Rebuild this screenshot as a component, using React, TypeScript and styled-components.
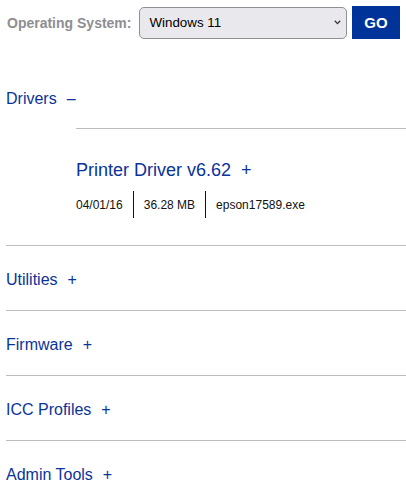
import React from 'react';
import styled, { createGlobalStyle } from 'styled-components';

const GlobalStyle = createGlobalStyle`
  body {
    margin: 0;
    background: #fff;
    font-family: 'Liberation Sans', Arial, Helvetica, sans-serif;
  }
`;

type Download = {
  title: string;
  date: string;
  size: string;
  file: string;
};

type Category = {
  name: string;
  // Open categories list their downloads underneath
  open?: boolean;
  downloads?: Download[];
};

const categories: Category[] = [
  {
    name: 'Drivers',
    open: true,
    downloads: [{ title: 'Printer Driver v6.62', date: '04/01/16', size: '36.28 MB', file: 'epson17589.exe' }],
  },
  { name: 'Utilities' },
  { name: 'Firmware' },
  { name: 'ICC Profiles' },
  { name: 'Admin Tools' },
];

const Page = styled.div`
  width: 406px;
  color: #111;
`;

const OsBar = styled.form`
  display: flex;
  align-items: center;
  padding: 6px 6px 0 7px;
  margin-bottom: 26px;
`;

const OsLabel = styled.label`
  font-size: 14px;
  font-weight: bold;
  color: #8e8e92;
  margin-right: 8px;
  white-space: nowrap;
`;

const SelectWrap = styled.div`
  position: relative;
  width: 208px;
  height: 32px;
`;

const OsSelect = styled.select`
  appearance: none;
  width: 100%;
  height: 100%;
  box-sizing: border-box;
  padding: 0 24px 0 9px;
  font-family: 'Liberation Sans', Arial, sans-serif;
  font-size: 13.33px;
  color: #000;
  background: #e9e9ed;
  border: 1px solid #8f8f95;
  border-radius: 5px;
  outline: none;
`;

const Chevron = styled.svg`
  position: absolute;
  right: 6px;
  top: 13px;
  pointer-events: none;
`;

const GoButton = styled.button`
  margin-left: 5px;
  width: 48px;
  height: 33px;
  border: none;
  background: #003399;
  color: #fff;
  font-family: 'Liberation Sans', Arial, sans-serif;
  font-size: 15px;
  font-weight: bold;
  cursor: pointer;
`;

const Sections = styled.div`
  margin-left: 6px;
`;

const Section = styled.section<{ first?: boolean }>`
  border-top: ${({ first }) => (first ? 'none' : '1px solid #bcbcbc')};
  padding: 25px 0 21px;
`;

const SectionTitle = styled.div`
  font-size: 16px;
  line-height: 18px;
  color: #0b3399;
  cursor: pointer;
`;

const Toggle = styled.span`
  margin-left: 10px;
`;

const SectionBody = styled.div`
  margin: 20px 0 6px 70px;
  border-top: 1px solid #bcbcbc;
  padding-top: 31px;
`;

const FileTitle = styled.div`
  font-size: 18px;
  line-height: 21px;
  color: #0b3399;
`;

const FileMeta = styled.div`
  display: flex;
  margin-top: 10px;
  height: 27px;
`;

const MetaItem = styled.span<{ divided?: boolean }>`
  display: flex;
  align-items: center;
  font-size: 12px;
  line-height: 14px;
  padding: 0 10px;
  border-left: ${({ divided }) => (divided ? '1px solid #111' : 'none')};

  &:first-child {
    padding-left: 0;
  }
`;

const App: React.FC = () => (
  <Page>
    <GlobalStyle />
    <OsBar onSubmit={(e) => e.preventDefault()}>
      <OsLabel htmlFor="os">Operating System:</OsLabel>
      <SelectWrap>
        <OsSelect id="os" defaultValue="win11">
          <option value="win11">Windows 11</option>
          <option value="win10">Windows 10</option>
          <option value="mac">macOS</option>
        </OsSelect>
        <Chevron width="7" height="5" viewBox="0 0 7 5">
          <path d="M0.8 0.8 L3.5 3.6 L6.2 0.8" fill="none" stroke="#333" strokeWidth="1.3" />
        </Chevron>
      </SelectWrap>
      <GoButton type="submit">GO</GoButton>
    </OsBar>

    <Sections>
      {categories.map((cat, i) => (
        <Section key={cat.name} first={i === 0}>
          <SectionTitle>
            {cat.name}
            <Toggle>{cat.open ? '–' : '+'}</Toggle>
          </SectionTitle>
          {cat.open && cat.downloads && (
            <SectionBody>
              {cat.downloads.map((d) => (
                <div key={d.file}>
                  <FileTitle>
                    {d.title}
                    <Toggle>+</Toggle>
                  </FileTitle>
                  <FileMeta>
                    <MetaItem>{d.date}</MetaItem>
                    <MetaItem divided>{d.size}</MetaItem>
                    <MetaItem divided>{d.file}</MetaItem>
                  </FileMeta>
                </div>
              ))}
            </SectionBody>
          )}
        </Section>
      ))}
    </Sections>
  </Page>
);

export default App;
